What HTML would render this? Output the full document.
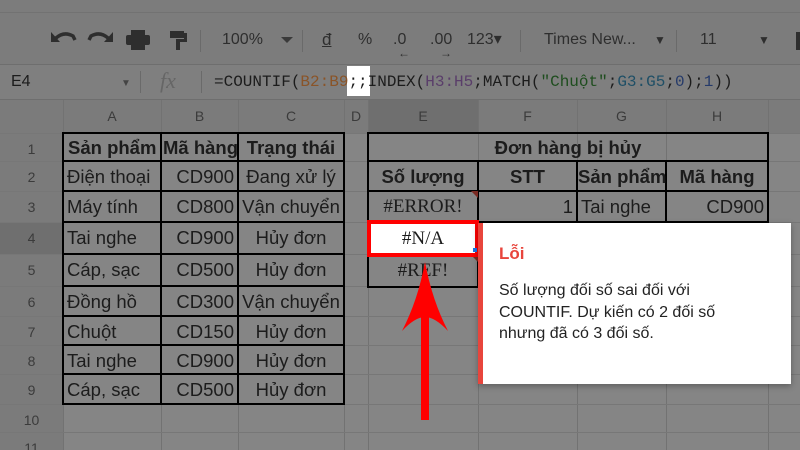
<!DOCTYPE html>
<html><head><meta charset="utf-8"><style>
*{margin:0;padding:0;box-sizing:border-box}
html,body{width:800px;height:450px;overflow:hidden}
body{background:#858585;position:relative;font-family:"Liberation Sans",sans-serif}
.a{position:absolute}
.t{position:absolute;font-size:18.5px;color:#1c1c1c;white-space:nowrap;line-height:30px}
.b{font-weight:bold}
.hd{position:absolute;color:#3b3b3b;font-size:14px;text-align:center}
.ser{font-family:"Liberation Serif",serif}
</style></head><body>
<div class="a" style="left:0;top:0;width:800px;height:64px;background:#7c7c7c"></div>
<div class="a" style="left:0;top:12px;width:800px;height:1px;background:#727272"></div>
<div class="a" style="left:0;top:64px;width:800px;height:1px;background:#6e6e6e"></div>
<div class="a" style="left:0;top:65px;width:800px;height:34px;background:#7f7f7f"></div>
<div class="a" style="left:0;top:99px;width:800px;height:1px;background:#6e6e6e"></div>
<!-- toolbar icons -->
<svg class="a" style="left:0;top:0" width="200" height="64" viewBox="0 0 200 64">
<g fill="none" stroke="#2e2e2e" stroke-width="3.5">
<path d="M56 38 Q64 31 73 36 L75 40"/>
<path d="M108 38 Q100 31 91 36 L89 40"/>
</g>
<path d="M51 32 L51 42 L60 42 Z" fill="#2e2e2e"/>
<path d="M113 32 L113 42 L104 42 Z" fill="#2e2e2e"/>
<rect x="131" y="30" width="14" height="5" fill="#2e2e2e"/>
<rect x="126" y="35" width="24" height="10" rx="2" fill="#2e2e2e"/>
<rect x="131" y="42" width="14" height="8" fill="#fff" opacity="0"/>
<rect x="131" y="43" width="14" height="7" fill="#2e2e2e"/>
<rect x="170" y="31" width="14" height="7" fill="#2e2e2e"/>
<rect x="184" y="33" width="3" height="7" fill="#2e2e2e"/>
<rect x="176" y="39" width="11" height="3" fill="#2e2e2e"/>
<rect x="176" y="39" width="4" height="11" fill="#2e2e2e"/>
</svg>
<svg class="a" style="left:280px;top:35px" width="14" height="10"><path d="M1 2 L7 8 L13 2 Z" fill="#3a3a3a"/></svg>
<div class="a" style="left:200px;top:30px;width:1px;height:22px;background:#6a6a6a"></div>
<div class="a" style="left:302px;top:30px;width:1px;height:22px;background:#6a6a6a"></div>
<div class="a" style="left:520px;top:30px;width:1px;height:22px;background:#6a6a6a"></div>
<div class="a" style="left:676px;top:30px;width:1px;height:22px;background:#6a6a6a"></div>
<div class="t" style="left:222px;top:25px;font-size:16px;color:#2e2e2e">100%</div>
<div class="t" style="left:322px;top:25px;font-size:17px;color:#2e2e2e;text-decoration:underline">đ</div>
<div class="t" style="left:358px;top:25px;font-size:16px;color:#2e2e2e">%</div>
<div class="t" style="left:393px;top:25px;font-size:16px;color:#2e2e2e">.0</div>
<div class="t" style="left:398px;top:38px;font-size:12px;color:#2e2e2e">←</div>
<div class="t" style="left:430px;top:25px;font-size:16px;color:#2e2e2e">.00</div>
<div class="t" style="left:440px;top:38px;font-size:12px;color:#2e2e2e">→</div>
<div class="t" style="left:467px;top:25px;font-size:16px;color:#2e2e2e">123▾</div>
<div class="t" style="left:544px;top:25px;font-size:16px;color:#2e2e2e">Times New...</div>
<div class="t" style="left:654px;top:25px;font-size:12px;color:#2e2e2e">▼</div>
<div class="t" style="left:700px;top:25px;font-size:16px;color:#2e2e2e">11</div>
<div class="t" style="left:758px;top:25px;font-size:12px;color:#2e2e2e">▼</div>
<div class="a" style="left:796px;top:32px;width:4px;height:18px;background:#2e2e2e"></div>
<!-- formula bar -->
<div class="t" style="left:11px;top:67px;font-size:16px">E4</div>
<div class="t" style="left:121px;top:69px;font-size:10px;color:#444">▼</div>
<div class="a" style="left:140px;top:71px;width:1px;height:22px;background:#6a6a6a"></div>
<div class="t" style="left:160px;top:66px;font-size:22px;color:#666;font-family:'Liberation Serif',serif;font-style:italic">fx</div>
<div class="a" style="left:201px;top:71px;width:1px;height:22px;background:#6a6a6a"></div>
<div class="a" style="left:347px;top:66px;width:23px;height:30px;background:#fff"></div>
<div class="t" style="left:214px;top:67px;font-family:'Liberation Mono',monospace;font-size:16px;color:#1c1c1c">=COUNTIF(<span style="color:#8a5428">B2:B9</span>;;INDEX(<span style="color:#5a3e6a">H3:H5</span>;MATCH(<span style="color:#1e4d1e">"Chuột"</span>;<span style="color:#1f4f66">G3:G5</span>;<span style="color:#253a6a">0</span>);<span style="color:#253a6a">1</span>))</div>
<!-- headers -->
<div class="a" style="left:0;top:100px;width:800px;height:33px;background:#7b7b7b"></div>
<div class="a" style="left:0;top:100px;width:63px;height:350px;background:#7b7b7b"></div>
<div class="a" style="left:368px;top:100px;width:110px;height:33px;background:#6f6f6f"></div>
<div class="a" style="left:0;top:222px;width:63px;height:32px;background:#6f6f6f"></div>
<div id="g"></div>
<!-- left table text -->
<div class="t b" style="left:68px;top:133px">Sản phẩm</div>
<div class="t b" style="left:163px;top:133px">Mã hàng</div>
<div class="t b" style="left:238px;top:133px;width:106px;text-align:center">Trạng thái</div>
<div id="txt"></div>
<!-- right table -->
<div class="t b" style="left:368px;top:133px;width:400px;text-align:center">Đơn hàng bị hủy</div>
<div class="t b" style="left:368px;top:162px;width:110px;text-align:center">Số lượng</div>
<div class="t b" style="left:478px;top:162px;width:99px;text-align:center">STT</div>
<div class="t b" style="left:578px;top:162px">Sản phẩm</div>
<div class="t b" style="left:666px;top:162px;width:102px;text-align:center">Mã hàng</div>
<div class="t ser" style="left:368px;top:192px;width:110px;text-align:center;font-size:19px">#ERROR!</div>
<div class="t" style="left:478px;top:192px;width:95px;text-align:right">1</div>
<div class="t" style="left:581px;top:192px">Tai nghe</div>
<div class="t" style="left:666px;top:192px;width:98px;text-align:right">CD900</div>
<div class="t ser" style="left:368px;top:256px;width:110px;text-align:center;font-size:19px">#REF!</div>
<div class="a" style="left:471px;top:191px;border-left:7px solid transparent;border-top:7px solid #7a2a22"></div>
<div class="a" style="left:471px;top:255px;border-left:7px solid transparent;border-top:7px solid #7a2a22"></div>
<!-- E4 selected -->
<div class="a" style="left:367px;top:220px;width:112px;height:37px;border:4px solid #f00;background:#fff"></div>
<div class="t ser" style="left:368px;top:224px;width:110px;text-align:center;font-size:19px;line-height:30px">#N/A</div>
<div class="a" style="left:473px;top:248px;width:4px;height:4px;background:#1a73e8"></div>
<!-- tooltip -->
<div class="a" style="left:478px;top:223px;width:313px;height:161px;background:#fff;border-left:5px solid #e8453c;box-shadow:0 2px 6px rgba(0,0,0,.3)"></div>
<div class="t b" style="left:499px;top:239px;color:#e8453c;font-size:17px">Lỗi</div>
<div class="a" style="left:499px;top:280px;font-size:16px;line-height:21.5px;color:#222;width:290px">Số lượng đối số sai đối với<br>COUNTIF. Dự kiến có 2 đối số<br>nhưng đã có 3 đối số.</div>
<!-- arrow -->
<svg class="a" style="left:390px;top:255px" width="70" height="170"><rect x="31" y="45" width="8" height="120" fill="#f00"/><path d="M35 7 Q42 45 58 76 Q45 62 35 62 Q25 62 12 76 Q28 45 35 7Z" fill="#f00"/></svg>
<script>
var cols=[63,161,238,344,368,478,577,666,768];
var rows=[133,161,191,222,254,286,316,345,374,404,432];
var g='';
cols.forEach(function(x){g+='<div class="a" style="left:'+x+'px;top:100px;width:1px;height:350px;background:#727272"></div>'});
rows.forEach(function(y){g+='<div class="a" style="left:0;top:'+y+'px;width:800px;height:1px;background:#777"></div>'});
var hl=['A','B','C','D','E','F','G','H'];
for(var i=0;i<8;i++)g+='<div class="hd" style="left:'+cols[i]+'px;top:108px;width:'+(cols[i+1]-cols[i])+'px">'+hl[i]+'</div>';
for(var r=0;r<11;r++)g+='<div class="hd" style="left:0;top:'+(rows[r]+8)+'px;width:63px">'+(r+1)+'</div>';
function bl(x,y,w,h){g+='<div class="a" style="left:'+x+'px;top:'+y+'px;width:'+w+'px;height:'+h+'px;background:#000"></div>'}
[63,161,238,344].forEach(function(x){bl(x-1,133,2,272)});
for(var r=0;r<10;r++)bl(62,rows[r]-1,283,2);
[368,478,577,666,768].forEach(function(x,i){bl(x-1,i==0||i==4?133:161,2,i==0?155:(222-(i==4?133:161)))});
[133,161,191,222].forEach(function(y){bl(367,y-1,402,2)});
bl(367,254,112,2);bl(367,286,112,2);bl(477,222,2,65);
document.getElementById('g').innerHTML=g;
var d=[['Điện thoại','CD900','Đang xử lý'],['Máy tính','CD800','Vận chuyển'],['Tai nghe','CD900','Hủy đơn'],['Cáp, sạc','CD500','Hủy đơn'],['Đồng hồ','CD300','Vận chuyển'],['Chuột','CD150','Hủy đơn'],['Tai nghe','CD900','Hủy đơn'],['Cáp, sạc','CD500','Hủy đơn']];
var t='';
d.forEach(function(v,i){var y=rows[i+1]+1;
t+='<div class="t" style="left:67px;top:'+y+'px">'+v[0]+'</div>';
t+='<div class="t" style="left:161px;top:'+y+'px;width:73px;text-align:right">'+v[1]+'</div>';
t+='<div class="t" style="left:238px;top:'+y+'px;width:106px;text-align:center">'+v[2]+'</div>';});
document.getElementById('txt').innerHTML=t;
</script>
</body></html>
